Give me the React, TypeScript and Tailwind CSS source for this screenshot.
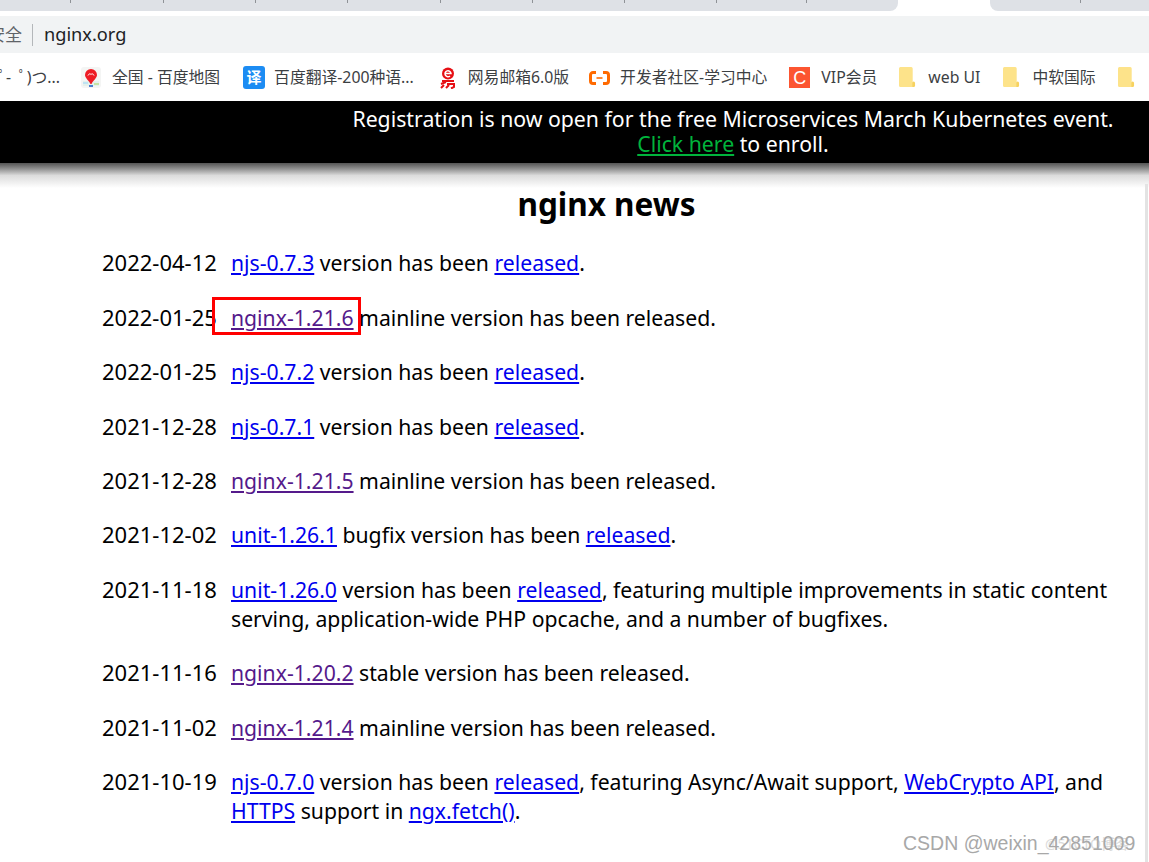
import React from "react";

const CJK = "font-['Noto_Sans','Noto_Sans_CJK_SC',sans-serif]";

const tabSeparators = ["ml-[70px]", "ml-[92px]", "ml-[91px]", "ml-[91px]", "ml-[92px]", "ml-[91px]", "ml-[91px]", "ml-[91px]", "ml-[89px]"];

const Folder = () => (
    <svg width="17" height="21" viewBox="0 0 18 21" preserveAspectRatio="none" className="shrink-0">
        <path d="M1.500 0h11.500a1.500 1.500 0 0 1 1.500 1.500V20H1.500A1.500 1.500 0 0 1 0 18.500V1.500A1.500 1.500 0 0 1 1.500 0z" fill="#fde38a" />
        <path d="M14 20v-4a1.500 1.500 0 0 1 3 0v2.500a1.500 1.500 0 0 1-1.500 1.500z" fill="#f7d25f" />
    </svg>
);

const PinIcon = () => (
    <svg width="20" height="21" viewBox="0 0 20 21" className="shrink-0">
        <rect x="0" y="0" width="20" height="21" rx="3" fill="#f4f5f4" />
        <path d="M2 14h16v5H2z" fill="#e4f1ec" />
        <path d="M10 2a6 6 0 0 1 6 6c0 3-3.500 5-5.500 9h-1C7.500 13 4 11 4 8a6 6 0 0 1 6-6z" fill="#ee1c25" />
        <path d="M7 8.500c1-2 2-2 3-1 1-1 2-1 3 1" fill="none" stroke="#fff" strokeWidth="1" />
        <path d="M2 15h5v2H2z" fill="#bfe3f3" />
        <path d="M13 16h5v2h-5z" fill="#c6e3a6" />
        <path d="M8 18h4v2H8z" fill="#4c7fd0" />
    </svg>
);

const TranslateIcon = () => (
    <div className={`flex h-[23px] w-[22px] shrink-0 items-center justify-center rounded-[3px] bg-[#1c8cf3] text-[15px] font-bold leading-none text-white ${CJK}`}>
        译
    </div>
);

const MailIcon = () => (
    <svg width="16" height="22" viewBox="0 0 16 22" className="shrink-0">
        <circle cx="8" cy="6.500" r="6" fill="#e60f14" />
        <path d="M5 6.500h6a3 3 0 1 0-1 2.500" fill="none" stroke="#fff" strokeWidth="1.500" />
        <path d="M2 14h12M1 17l5-2M7 17h7v3l-3 1.500M9 18l-3 3M4 18l-3 3" fill="none" stroke="#e60f14" strokeWidth="2" />
    </svg>
);

const AliIcon = () => (
    <svg width="21" height="14" viewBox="0 0 21 14" className="shrink-0">
        <path d="M7 1.500H4a2.500 2.500 0 0 0-2.500 2.500v6A2.500 2.500 0 0 0 4 12.500h3M14 1.500h3A2.500 2.500 0 0 1 19.500 4v6a2.500 2.500 0 0 1-2.500 2.500h-3" fill="none" stroke="#ff6a00" strokeWidth="3" />
        <path d="M7.500 7h6" stroke="#ff6a00" strokeWidth="1.600" />
    </svg>
);

const CsdnIcon = () => (
    <div className="flex h-[21px] w-[21px] shrink-0 items-center justify-center bg-[#fc5531] font-['Liberation_Sans',sans-serif] text-[18px] leading-none text-white">
        C
    </div>
);

const bookmarks = [
    { icon: <PinIcon />, label: "全国 - 百度地图", box: "ml-[21px]", gap: "ml-[11px]" },
    { icon: <TranslateIcon />, label: "百度翻译-200种语...", box: "ml-[23px]", gap: "ml-[9px]" },
    { icon: <MailIcon />, label: "网易邮箱6.0版", box: "ml-[26px]", gap: "ml-[12px]" },
    { icon: <AliIcon />, label: "开发者社区-学习中心", box: "ml-[20px]", gap: "ml-[10px]" },
    { icon: <CsdnIcon />, label: "VIP会员", box: "ml-[22px]", gap: "ml-[11px]" },
    { icon: <Folder />, label: "web UI", box: "ml-[22px]", gap: "ml-[12px]" },
    { icon: <Folder />, label: "中软国际", box: "ml-[23px]", gap: "ml-[12px]" },
    { icon: <Folder />, label: "", box: "ml-[22px]", gap: "" },
];

const A = ({ children, visited }: { children: React.ReactNode; visited?: boolean }) => (
    <a href="#" className={`underline ${visited ? "text-[#551a8b]" : "text-[#0000ee]"}`}>
        {children}
    </a>
);

const news: { date: string; body: React.ReactNode }[] = [
    { date: "2022-04-12", body: <><A>njs-0.7.3</A> version has been <A>released</A>.</> },
    { date: "2022-01-25", body: <><A visited>nginx-1.21.6</A> mainline version has been released.</> },
    { date: "2022-01-25", body: <><A>njs-0.7.2</A> version has been <A>released</A>.</> },
    { date: "2021-12-28", body: <><A>njs-0.7.1</A> version has been <A>released</A>.</> },
    { date: "2021-12-28", body: <><A visited>nginx-1.21.5</A> mainline version has been released.</> },
    { date: "2021-12-02", body: <><A>unit-1.26.1</A> bugfix version has been <A>released</A>.</> },
    { date: "2021-11-18", body: <><A>unit-1.26.0</A> version has been <A>released</A>, featuring multiple improvements in static content serving, application-wide PHP opcache, and a number of bugfixes.</> },
    { date: "2021-11-16", body: <><A visited>nginx-1.20.2</A> stable version has been released.</> },
    { date: "2021-11-02", body: <><A visited>nginx-1.21.4</A> mainline version has been released.</> },
    { date: "2021-10-19", body: <><A>njs-0.7.0</A> version has been <A>released</A>, featuring Async/Await support, <A>WebCrypto API</A>, and <A>HTTPS</A> support in <A>ngx.fetch()</A>.</> },
];

export default function App() {
    return (
        <div className={`relative h-[862px] w-[1149px] overflow-hidden bg-white ${CJK}`}>
            {/* Tab strip */}
            <div className="flex h-[11px] bg-white">
                <div className="flex w-[898px] items-start rounded-br-[8px] bg-[#dee1e6]">
                    {tabSeparators.map((sep, i) => (
                        <div key={i} className={`h-[3px] w-px bg-[#8f9297] ${sep}`} />
                    ))}
                </div>
                <div className="w-[92px]" />
                <div className="flex flex-1 items-start rounded-bl-[8px] bg-[#dee1e6]">
                    <div className="ml-[90px] h-[3px] w-px bg-[#8f9297]" />
                </div>
            </div>

            {/* Address bar */}
            <div className="mt-[5px] flex h-[37px] items-center bg-[#f1f3f4]">
                <span className="ml-[-12px] text-[17px] leading-none text-[#5f6368]">安全</span>
                <div className="ml-[10px] h-[22px] w-px bg-[#b4b7ba]" />
                <span className="ml-[11px] text-[18.2px] text-[#202124]">nginx.org</span>
            </div>

            {/* Bookmarks bar */}
            <div className="flex h-[47px] items-center whitespace-nowrap pt-[2px] text-[15.8px] text-[#3c4043]">
                <div className="flex w-[60px] justify-end overflow-hidden">
                    <span className="shrink-0 whitespace-pre">ﾟ-  ﾟ)つ...</span>
                </div>
                {bookmarks.map((b, i) => (
                    <div key={i} className={`flex items-center ${b.box}`}>
                        {b.icon}
                        {b.label && <span className={b.gap}>{b.label}</span>}
                    </div>
                ))}
            </div>

            {/* Event banner */}
            <div className="mt-px h-[62px] bg-black pl-[317px] pt-[5px] text-center text-[21.25px] leading-[26px] text-white">
                <p>Registration is now open for the free Microservices March Kubernetes event.</p>
                <p className="-mt-px"><a href="#" className="text-[#00b43c] underline">Click here</a> to enroll.</p>
            </div>
            <div className="h-[25px] bg-gradient-to-b from-[#555555] via-[#dcdcdc] via-50% to-white" />

            {/* News */}
            <div className="relative mr-px border-r-[3px] border-[#e3e3e3] pb-[40px]">
                <div className="ml-[102px] w-[1009px] text-[21.2px] leading-[29px] text-black">
                    <h1 className="mt-[-4px] text-center text-[31.5px] font-bold leading-[40px]">nginx news</h1>
                    <div className="mt-[24.4px]">
                        {news.map((n, i) => (
                            <div key={i} className="mb-[25.4px] grid grid-cols-[129px_1fr]">
                                <span className="text-[22px]">{n.date}</span>
                                <div>{n.body}</div>
                            </div>
                        ))}
                    </div>
                </div>
            </div>

            {/* Annotation box */}
            <div className="absolute left-[212px] top-[297px] h-[38px] w-[149px] border-[3px] border-[#ff0000]" />

            {/* Watermark */}
            <span className={`absolute left-[1045px] top-[834px] text-[14px] leading-[20px] text-[#dadada] ${CJK}`}>
                @51CTO博客
            </span>
            <span className="absolute left-[903px] top-[830px] font-['Liberation_Sans',sans-serif] text-[19.5px] leading-[26px] text-[#a8a8a8]">
                CSDN @weixin_42851009
            </span>
        </div>
    );
}
